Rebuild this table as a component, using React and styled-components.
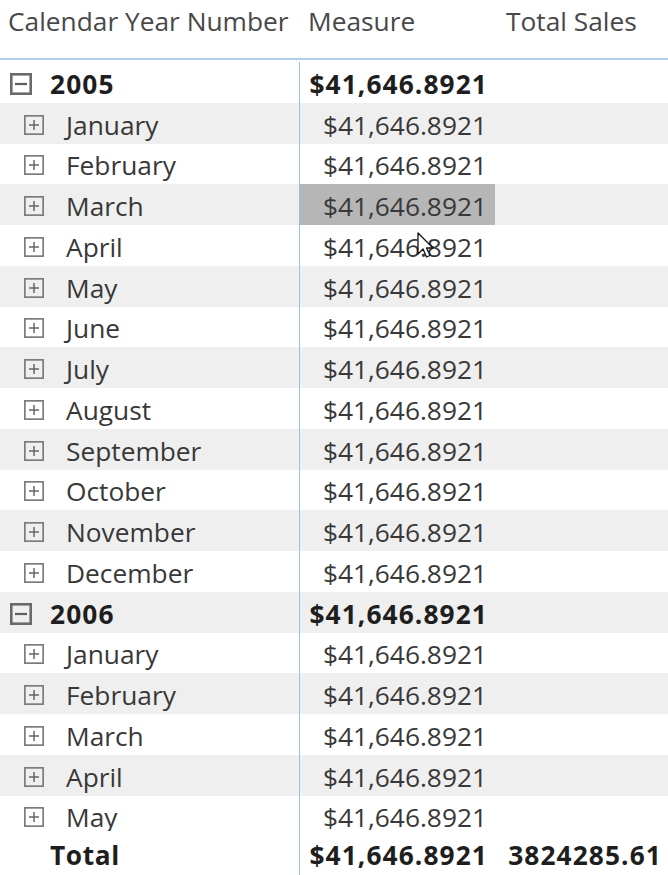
import React from "react";
import styled, { createGlobalStyle } from "styled-components";

const Global = createGlobalStyle`
  html, body { margin: 0; padding: 0; background: #fff; }
  body { font-family: "Open Sans", "Noto Sans", sans-serif; }
`;

const COLS = "299px 196px 1fr";

const Table = styled.div`
  position: relative;
  width: 668px;
  height: 875px;
  overflow: hidden;
  display: flex;
  flex-direction: column;
  background: #fff;
`;

const HeaderRow = styled.div`
  display: grid;
  grid-template-columns: ${COLS};
  height: 58px;
  border-bottom: 2px solid #b0cfee;
  box-sizing: content-box;
  font-size: 26.3px;
  color: #484848;
`;

const HeaderCell = styled.div`
  padding: 3px 0 0 ${(p) => p.$pl || 8}px;
  white-space: nowrap;
`;

const Body = styled.div`
  height: 771px;
  padding-top: 2px;
  box-sizing: border-box;
  overflow: hidden;
`;

const Row = styled.div`
  display: grid;
  grid-template-columns: ${COLS};
  height: 40.75px;
  background: ${(p) => (p.$alt ? "#efefef" : "#ffffff")};
  font-size: 26.3px;
  color: ${(p) => (p.$bold ? "#1e1e1e" : "#383838")};
  font-weight: ${(p) => (p.$bold ? 700 : 400)};
  letter-spacing: ${(p) => (p.$bold ? "1.1px" : "0")};
`;

const LabelCell = styled.div`
  display: flex;
  align-items: center;
  padding-left: ${(p) => (p.$level ? 24 : 10)}px;
  padding-top: 3px;
  gap: ${(p) => (p.$level ? 22 : 18)}px;
  white-space: nowrap;
`;

const ValueCell = styled.div`
  display: flex;
  align-items: center;
  justify-content: flex-end;
  padding-right: ${(p) => (p.$bold ? 7 : 8)}px;
  padding-top: 3px;
  border-left: 1.5px solid #98c2ea;
  background: ${(p) => (p.$hl ? "#b6b6b6" : "transparent")};
  white-space: nowrap;
`;

const PlainCell = styled.div`
  display: flex;
  align-items: center;
  justify-content: flex-end;
  padding-right: 6px;
  padding-top: 3px;
  white-space: nowrap;
`;

const TotalRow = styled(Row)`
  flex: 1;
  height: auto;
  background: #fff;
`;

const TotalLabel = styled(LabelCell)`
  padding-left: 50px;
  letter-spacing: 0.6px;
`;

const Box = styled.span`
  flex: none;
  display: inline-flex;
  width: ${(p) => p.$size}px;
  height: ${(p) => p.$size}px;
`;

const CursorWrap = styled.div`
  position: absolute;
  left: 417px;
  top: 232px;
  width: 20px;
  height: 30px;
`;

function ToggleIcon({ expanded }) {
  const s = expanded ? 22 : 20;
  const sw = expanded ? 2.6 : 1.7;
  return (
    <Box $size={s}>
      <svg width={s} height={s} viewBox={`0 0 ${s} ${s}`}>
        <rect
          x={sw / 2}
          y={sw / 2}
          width={s - sw}
          height={s - sw}
          fill="none"
          stroke={expanded ? "#6a6a6a" : "#7c7c7c"}
          strokeWidth={sw}
        />
        <line
          x1={5}
          x2={s - 5}
          y1={s / 2}
          y2={s / 2}
          stroke={expanded ? "#5e5e5e" : "#666"}
          strokeWidth={expanded ? 2.2 : 1.5}
        />
        {!expanded && (
          <line x1={s / 2} x2={s / 2} y1={5} y2={s - 5} stroke="#666" strokeWidth={1.5} />
        )}
      </svg>
    </Box>
  );
}

const MONTHS = [
  "January", "February", "March", "April", "May", "June",
  "July", "August", "September", "October", "November", "December",
];

const VALUE = "$41,646.8921";

function buildRows() {
  const rows = [];
  rows.push({ label: "2005", year: true });
  MONTHS.forEach((m) => rows.push({ label: m }));
  rows.push({ label: "2006", year: true });
  MONTHS.slice(0, 5).forEach((m) => rows.push({ label: m }));
  return rows;
}

export default function App() {
  const rows = buildRows();
  return (
    <>
      <Global />
      <Table>
        <HeaderRow>
          <HeaderCell $pl={8}>Calendar Year Number</HeaderCell>
          <HeaderCell $pl={9}>Measure</HeaderCell>
          <HeaderCell $pl={11}>Total Sales</HeaderCell>
        </HeaderRow>
        <Body>
          {rows.map((r, i) => (
            <Row key={i} $alt={i % 2 === 1} $bold={r.year}>
              <LabelCell $level={!r.year}>
                <ToggleIcon expanded={r.year} />
                <span>{r.label}</span>
              </LabelCell>
              <ValueCell $hl={i === 3} $bold={r.year}>{VALUE}</ValueCell>
              <PlainCell />
            </Row>
          ))}
        </Body>
        <TotalRow $bold>
          <TotalLabel>Total</TotalLabel>
          <ValueCell $bold>{VALUE}</ValueCell>
          <PlainCell>3824285.61</PlainCell>
        </TotalRow>
        <CursorWrap>
          <svg width="20" height="30" viewBox="0 0 20 30">
            <path
              d="M1 1 L1 22 L6 17 L9.5 25 L13 23.5 L9.5 16 L16 16 Z"
              fill="#fff"
              stroke="#111"
              strokeWidth="1.3"
              strokeLinejoin="round"
            />
          </svg>
        </CursorWrap>
      </Table>
    </>
  );
}
